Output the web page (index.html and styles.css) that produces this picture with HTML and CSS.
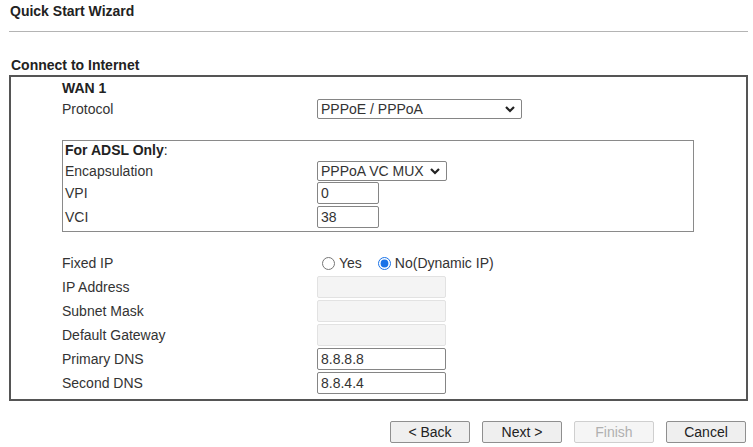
FILE: index.html
```html
<!DOCTYPE html>
<html lang="en">

<head>
    <meta charset="UTF-8">
    <meta name="viewport" content="width=device-width, initial-scale=1.0">
    <title>Quick Start Wizard</title>

    <link rel="stylesheet" href="styles.css">

</head>

<body>

    <h1 class="pageTitle">Quick Start Wizard</h1>
    <hr class="linha">

    <h2 class="secao">Connect to Internet</h2>

    <div class="painel">
        <div class="wan">WAN 1</div>

        <div class="linhaCampo protocolo">
            <span class="rotulo">Protocol</span>
            <span class="caixaSelect largo">
                <select class="campo">
                    <option>PPPoE / PPPoA</option>
                </select>
                <svg class="seta" width="12" height="8" viewBox="0 0 12 8">
                    <path d="M2 2 L6 6 L10 2" fill="none" stroke="#222" stroke-width="2.2" />
                </svg>
            </span>
        </div>

        <div class="adsl">
            <div class="adslTitulo"><b>For ADSL Only</b>:</div>
            <div class="linhaAdsl encap">
                <span class="rotulo">Encapsulation</span>
                <span class="caixaSelect medio">
                    <select class="campo">
                        <option>PPPoA VC MUX</option>
                    </select>
                    <svg class="seta" width="12" height="8" viewBox="0 0 12 8">
                        <path d="M2 2 L6 6 L10 2" fill="none" stroke="#222" stroke-width="2.2" />
                    </svg>
                </span>
            </div>
            <div class="linhaAdsl">
                <span class="rotulo">VPI</span>
                <input class="campo curto" type="text" value="0">
            </div>
            <div class="linhaAdsl">
                <span class="rotulo">VCI</span>
                <input class="campo curto" type="text" value="38">
            </div>
        </div>

        <div class="grade">
            <span class="rotulo">Fixed IP</span>
            <span class="radios">
                <label class="opcao"><input type="radio" name="fixo">Yes</label>
                <label class="opcao"><input type="radio" name="fixo" checked>No(Dynamic IP)</label>
            </span>

            <span class="rotulo">IP Address</span>
            <input class="campo ip" type="text" disabled>

            <span class="rotulo">Subnet Mask</span>
            <input class="campo ip" type="text" disabled>

            <span class="rotulo">Default Gateway</span>
            <input class="campo ip" type="text" disabled>

            <span class="rotulo">Primary DNS</span>
            <input class="campo ip" type="text" value="8.8.8.8">

            <span class="rotulo">Second DNS</span>
            <input class="campo ip" type="text" value="8.8.4.4">
        </div>
    </div>

    <div class="botoes">
        <button class="btn">&lt; Back</button>
        <button class="btn">Next &gt;</button>
        <button class="btn" disabled>Finish</button>
        <button class="btn">Cancel</button>
    </div>

</body>

</html>
```

FILE: styles.css
```css
body {
    margin: 0;
    padding: 0 5px 0 9px;
    font-family: "Liberation Sans", Arial, sans-serif;
    font-size: 14px;
    color: #333;
    background: #fff;
}

.pageTitle {
    margin: 0;
    padding: 3px 0 0 1px;
    font-size: 14px;
    line-height: 16px;
    color: #222;
}

.linha {
    margin: 12px 0 0 0;
    border: 0;
    border-top: 1px solid #b4b4b4;
    height: 0;
}

.secao {
    margin: 25px 0 0 0;
    padding-left: 2px;
    font-size: 14px;
    line-height: 16px;
    color: #222;
}

.painel {
    margin-top: 2px;
    border: 2px solid #555;
    padding: 1px 0 5px 51px;
}

.wan {
    font-weight: bold;
    font-size: 14px;
    line-height: 20px;
    color: #222;
}

.linhaCampo {
    display: grid;
    grid-template-columns: 255px auto;
    align-items: center;
    height: 22px;
}

.rotulo {
    line-height: 16px;
}

.caixaSelect {
    position: relative;
    display: inline-block;
    justify-self: start;
}

.caixaSelect.largo {
    width: 205px;
}

.caixaSelect.medio {
    width: 130px;
}

.campo {
    box-sizing: border-box;
    height: 22px;
    margin: 0;
    padding: 0 0 0 3px;
    border: 1px solid #858585;
    border-radius: 2px;
    font-family: "Liberation Sans", Arial, sans-serif;
    font-size: 14px;
    color: #333;
    background: #fff;
}

select.campo {
    appearance: none;
    -webkit-appearance: none;
    display: block;
    width: 100%;
    height: 20px;
    padding-left: 3px;
}

.seta {
    position: absolute;
    right: 6px;
    top: 6px;
}

.adsl {
    margin: 20px 52px 0 0;
    border: 1px solid #8a8a8a;
    padding: 0 0 2px 2px;
}

.adslTitulo {
    line-height: 19px;
    color: #222;
}

.adslTitulo b {
    font-size: 14px;
}

.linhaAdsl {
    display: grid;
    grid-template-columns: 252px auto;
    align-items: center;
    height: 24px;
}

.linhaAdsl.encap {
    height: 21px;
}

.curto {
    width: 62px;
    justify-self: start;
}

.grade {
    display: grid;
    grid-template-columns: 255px auto;
    grid-auto-rows: 22px;
    row-gap: 2px;
    align-items: center;
    margin-top: 20px;
}

.ip {
    width: 129px;
    justify-self: start;
}

.ip:disabled {
    background: #f4f4f4;
    border-color: #e2e2e2;
}

.radios {
    display: flex;
    align-items: center;
}

.opcao {
    display: inline-flex;
    align-items: center;
    margin-right: 12px;
}

.opcao input {
    width: 13px;
    height: 13px;
    margin: 0 4px 0 5px;
    accent-color: #1a73e8;
}

.opcao + .opcao input {
    margin-left: 4px;
}

.botoes {
    display: flex;
    justify-content: flex-end;
    gap: 12px;
    margin: 20px 2px 0 0;
}

.btn {
    box-sizing: border-box;
    width: 80px;
    height: 22px;
    padding: 0;
    border: 1px solid #8f8f8f;
    border-radius: 2px;
    background: #efefef;
    font-family: "Liberation Sans", Arial, sans-serif;
    font-size: 14px;
    color: #222;
}

.btn:disabled {
    color: #b0b0b0;
    border-color: #cfcfcf;
    background: #f5f5f5;
}
```
